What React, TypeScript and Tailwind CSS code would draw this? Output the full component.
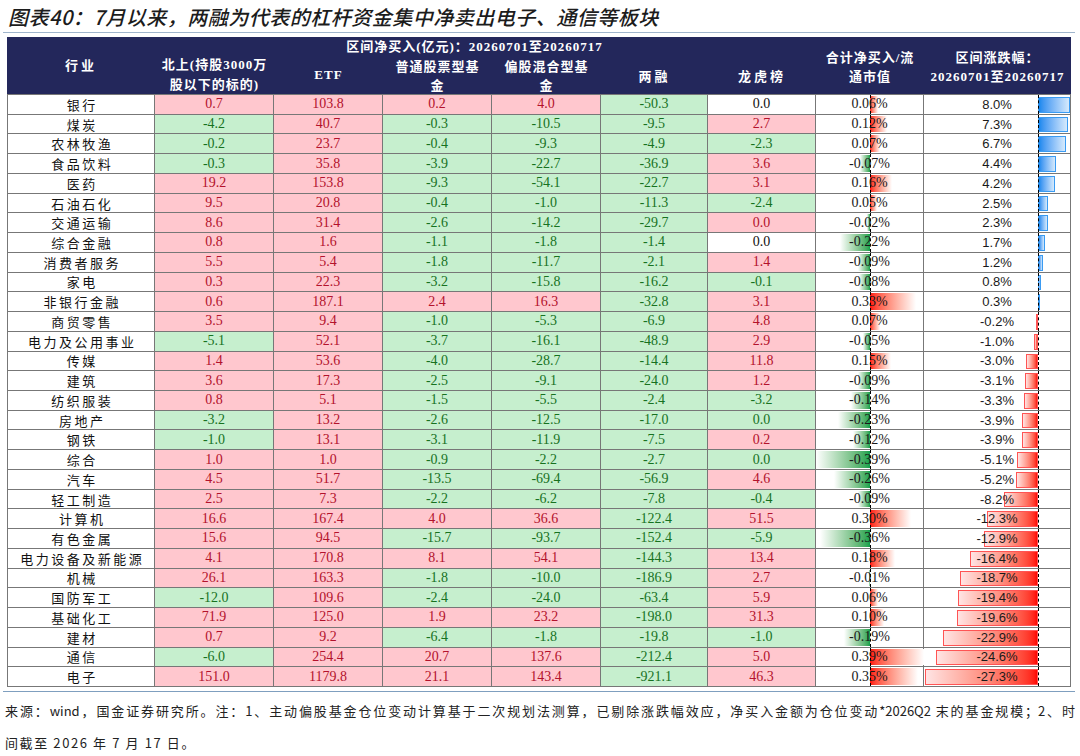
type Tone = 'p' | 'g' | 'w';
type Row = [string, number, number, number, number, number, number, number, number, Tone?];

// 行业, 北上, ETF, 普通股票型基金, 偏股混合型基金, 两融, 龙虎榜, 合计/流通市值(%), 区间涨跌幅(%), 龙虎榜为0时的底色
const rows: Row[] = [
  ['银行', 0.7, 103.8, 0.2, 4.0, -50.3, 0.0, 0.06, 8.0, 'w'],
  ['煤炭', -4.2, 40.7, -0.3, -10.5, -9.5, 2.7, 0.12, 7.3],
  ['农林牧渔', -0.2, 23.7, -0.4, -9.3, -4.9, -2.3, 0.07, 6.7],
  ['食品饮料', -0.3, 35.8, -3.9, -22.7, -36.9, 3.6, -0.07, 4.4],
  ['医药', 19.2, 153.8, -9.3, -54.1, -22.7, 3.1, 0.16, 4.2],
  ['石油石化', 9.5, 20.8, -0.4, -1.0, -11.3, -2.4, 0.05, 2.5],
  ['交通运输', 8.6, 31.4, -2.6, -14.2, -29.7, 0.0, -0.02, 2.3, 'p'],
  ['综合金融', 0.8, 1.6, -1.1, -1.8, -1.4, 0.0, -0.22, 1.7, 'w'],
  ['消费者服务', 5.5, 5.4, -1.8, -11.7, -2.1, 1.4, -0.09, 1.2],
  ['家电', 0.3, 22.3, -3.2, -15.8, -16.2, -0.1, -0.08, 0.8],
  ['非银行金融', 0.6, 187.1, 2.4, 16.3, -32.8, 3.1, 0.33, 0.3],
  ['商贸零售', 3.5, 9.4, -1.0, -5.3, -6.9, 4.8, 0.07, -0.2],
  ['电力及公用事业', -5.1, 52.1, -3.7, -16.1, -48.9, 2.9, -0.05, -1.0],
  ['传媒', 1.4, 53.6, -4.0, -28.7, -14.4, 11.8, 0.15, -3.0],
  ['建筑', 3.6, 17.3, -2.5, -9.1, -24.0, 1.2, -0.09, -3.1],
  ['纺织服装', 0.8, 5.1, -1.5, -5.5, -2.4, -3.2, -0.14, -3.3],
  ['房地产', -3.2, 13.2, -2.6, -12.5, -17.0, 0.0, -0.23, -3.9, 'g'],
  ['钢铁', -1.0, 13.1, -3.1, -11.9, -7.5, 0.2, -0.12, -3.9],
  ['综合', 1.0, 1.0, -0.9, -2.2, -2.7, 0.0, -0.39, -5.1, 'g'],
  ['汽车', 4.5, 51.7, -13.5, -69.4, -56.9, 4.6, -0.26, -5.2],
  ['轻工制造', 2.5, 7.3, -2.2, -6.2, -7.8, -0.4, -0.09, -8.2],
  ['计算机', 16.6, 167.4, 4.0, 36.6, -122.4, 51.5, 0.3, -12.3],
  ['有色金属', 15.6, 94.5, -15.7, -93.7, -152.4, -5.9, -0.36, -12.9],
  ['电力设备及新能源', 4.1, 170.8, 8.1, 54.1, -144.3, 13.4, 0.18, -16.4],
  ['机械', 26.1, 163.3, -1.8, -10.0, -186.9, 2.7, -0.01, -18.7],
  ['国防军工', -12.0, 109.6, -2.4, -24.0, -63.4, 5.9, 0.06, -19.4],
  ['基础化工', 71.9, 125.0, 1.9, 23.2, -198.0, 31.3, 0.1, -19.6],
  ['建材', 0.7, 9.2, -6.4, -1.8, -19.8, -1.0, -0.19, -22.9],
  ['通信', -6.0, 254.4, 20.7, 137.6, -212.4, 5.0, 0.39, -24.6],
  ['电子', 151.0, 1179.8, 21.1, 143.4, -921.1, 46.3, 0.35, -27.3],
];

const cols = 'grid grid-cols-[148px_119px_109px_109px_109px_107px_108px_108px_147px]';
const cell = 'border-r border-b border-[#777]';

const tones: Record<Tone, string> = {
  p: 'bg-[#ffc7ce] text-[#b3122c]',
  g: 'bg-[#c6efce] text-[#17721f]',
  w: 'bg-white text-[#111]',
};

function NumCell({ v, zero }: { v: number; zero?: Tone }) {
  const t: Tone = v > 0 ? 'p' : v < 0 ? 'g' : zero ?? 'w';
  return (
    <div className={`${cell} ${tones[t]} flex items-center justify-center text-[14px] leading-none font-['Liberation_Serif',serif]`}>
      {v.toFixed(1)}
    </div>
  );
}

function TotalCell({ v }: { v: number }) {
  const w = Math.abs(v) * 138;
  return (
    <div className={`${cell} relative bg-white flex items-center justify-center`}>
      {v > 0 ? (
        <div className="absolute top-[1px] bottom-[1px] left-[54px] bg-linear-to-r from-[#ff0000] to-white" style={{ width: w }} />
      ) : (
        <div className="absolute top-[1px] bottom-[1px] right-[53px] bg-linear-to-l from-[#0ca14b] to-white" style={{ width: w }} />
      )}
      <div className="absolute top-0 bottom-0 left-[54px] border-l border-dashed border-black" />
      <span className="relative text-[14px] leading-none text-[#1a1a1a] font-['Liberation_Serif',serif]">
        {v.toFixed(2)}%
      </span>
    </div>
  );
}

function ChgCell({ v }: { v: number }) {
  const w = Math.abs(v) * 4.15;
  return (
    <div className={`${cell} relative bg-white flex items-center justify-center`}>
      {v > 0 ? (
        <div
          className="absolute top-[2px] bottom-[1px] left-[114px] border border-[#3a9bf2] bg-linear-to-r from-[#1488ee] to-[#d6eafc]"
          style={{ width: Math.min(w, 32) }}
        />
      ) : (
        <div
          className="absolute top-[2px] bottom-[1px] right-[32px] border border-[#ff5454] bg-linear-to-l from-[#ff0000] to-[#ffe4e4]"
          style={{ width: w }}
        />
      )}
      <div className="absolute top-0 bottom-0 left-[114px] border-l border-dashed border-black" />
      <span className="relative text-[13px] leading-none text-[#1a1a1a] font-['Liberation_Sans',sans-serif]">
        {v.toFixed(1)}%
      </span>
    </div>
  );
}

function Header() {
  return (
    <div className={`${cols} grid-rows-[19px_38px] h-[57px] bg-[#23275b] text-white font-bold text-[13px] tracking-[1px] font-['Liberation_Serif','Noto_Sans_CJK_SC',serif]`}>
      <div className="row-span-2 row-start-1 col-start-1 flex items-center justify-center tracking-[3px]">行业</div>
      <div className="row-start-1 col-start-2 col-span-6 flex items-center justify-center pr-[22px]">
        区间净买入(亿元)：20260701至20260717
      </div>
      <div className="row-span-2 row-start-1 col-start-8 flex flex-col items-center justify-center leading-[19px] pt-[2px]">
        <span>合计净买入/流</span>
        <span>通市值</span>
      </div>
      <div className="row-span-2 row-start-1 col-start-9 flex flex-col items-center justify-center leading-[19px] pt-[2px]">
        <span>区间涨跌幅：</span>
        <span>20260701至20260717</span>
      </div>
      <div className="row-start-2 col-start-2 flex flex-col items-center justify-center leading-[20px]">
        <span>北上(持股3000万</span>
        <span>股以下的标的)</span>
      </div>
      <div className="row-start-2 col-start-3 flex items-center justify-center">ETF</div>
      <div className="row-start-2 col-start-4 flex flex-col items-center justify-center leading-[19px] pt-[1px]">
        <span>普通股票型基</span>
        <span>金</span>
      </div>
      <div className="row-start-2 col-start-5 flex flex-col items-center justify-center leading-[19px] pt-[1px]">
        <span>偏股混合型基</span>
        <span>金</span>
      </div>
      <div className="row-start-2 col-start-6 flex items-center justify-center tracking-[3px] pt-[4px]">两融</div>
      <div className="row-start-2 col-start-7 flex items-center justify-center tracking-[3px] pt-[4px]">龙虎榜</div>
    </div>
  );
}

export default function App() {
  return (
    <div className="w-[1080px] h-[756px] bg-white overflow-hidden font-['Noto_Sans_CJK_SC',sans-serif] text-[#1a1a1a]">
      <div className="h-[32px] pl-[8px] pt-[3px] text-[20px] leading-[28px] italic font-medium tracking-[0.5px] text-[#1c1c1c]">
        图表40：7月以来，两融为代表的杠杆资金集中净卖出电子、通信等板块
      </div>
      <div className="ml-[3px] w-[1072px] h-px bg-[#9fb5cc]" />
      <div className="ml-[7px] mt-[4px] w-[1064px]">
        <Header />
        <div className={`${cols} grid-rows-[repeat(30,minmax(0,1fr))] h-[593px] border-t border-[#777]`}>
          {rows.map((r) => [
            <div
              key={r[0] + 'n'}
              className={`${cell} border-l bg-white flex items-center justify-center text-[13px] leading-none tracking-[2.5px] pl-[2.5px] text-[#111]`}
            >
              {r[0]}
            </div>,
            <NumCell key={r[0] + '1'} v={r[1]} />,
            <NumCell key={r[0] + '2'} v={r[2]} />,
            <NumCell key={r[0] + '3'} v={r[3]} />,
            <NumCell key={r[0] + '4'} v={r[4]} />,
            <NumCell key={r[0] + '5'} v={r[5]} />,
            <NumCell key={r[0] + '6'} v={r[6]} zero={r[9]} />,
            <TotalCell key={r[0] + '7'} v={r[7]} />,
            <ChgCell key={r[0] + '8'} v={r[8]} />,
          ])}
        </div>
      </div>
      <div className="ml-[3px] mt-[4px] w-[1072px] h-px bg-[#7f9fbf]" />
      <div className="pl-[5px] pt-[3px] w-[1075px] text-[13px] leading-[32px] text-[#222]">
        <div className="text-justify [text-align-last:justify]">
          来源：wind，国金证券研究所。注：1、主动偏股基金仓位变动计算基于二次规划法测算，已剔除涨跌幅效应，净买入金额为仓位变动*2026Q2 末的基金规模；2、时
        </div>
        <div className="tracking-[1.6px]">间截至 2026 年 7 月 17 日。</div>
      </div>
    </div>
  );
}
